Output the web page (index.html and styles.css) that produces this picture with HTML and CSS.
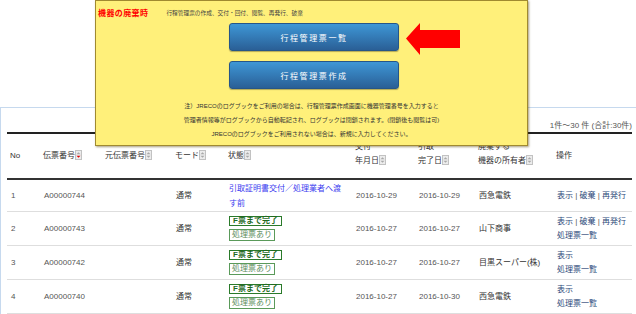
FILE: index.html
```html
<!DOCTYPE html>
<html lang="ja">
<head>
<meta charset="utf-8">
<title>行程管理票</title>
<link rel="stylesheet" href="styles.css">
</head>
<body>
<div class="page">
  <div class="list">
    <div class="count">1件～30 件 (合計:30件)</div>
    <table class="grid">
      <colgroup>
        <col class="c1"><col class="c2"><col class="c3"><col class="c4"><col class="c5"><col class="c6"><col class="c7"><col class="c8"><col class="c9">
      </colgroup>
      <thead>
        <tr>
          <th>No</th>
          <th>伝票番号<svg class="sort" viewBox="0 0 7 10"><rect x="0.5" y="0.5" width="6" height="9" fill="#ececec" stroke="#c2c2c2"/><path d="M1.5 4.2L3.5 2.2L5.5 4.2Z" fill="#a8a8a8"/><path d="M1.5 5.8L3.5 7.8L5.5 5.8Z" fill="#e00000"/></svg></th>
          <th>元伝票番号<svg class="sort" viewBox="0 0 7 10"><rect x="0.5" y="0.5" width="6" height="9" fill="#ececec" stroke="#c2c2c2"/><path d="M1.5 4.2L3.5 2.2L5.5 4.2Z" fill="#a8a8a8"/><path d="M1.5 5.8L3.5 7.8L5.5 5.8Z" fill="#a8a8a8"/></svg></th>
          <th>モード<svg class="sort" viewBox="0 0 7 10"><rect x="0.5" y="0.5" width="6" height="9" fill="#ececec" stroke="#c2c2c2"/><path d="M1.5 4.2L3.5 2.2L5.5 4.2Z" fill="#a8a8a8"/><path d="M1.5 5.8L3.5 7.8L5.5 5.8Z" fill="#a8a8a8"/></svg></th>
          <th>状態<svg class="sort" viewBox="0 0 7 10"><rect x="0.5" y="0.5" width="6" height="9" fill="#ececec" stroke="#c2c2c2"/><path d="M1.5 4.2L3.5 2.2L5.5 4.2Z" fill="#a8a8a8"/><path d="M1.5 5.8L3.5 7.8L5.5 5.8Z" fill="#a8a8a8"/></svg></th>
          <th class="two">交付<br>年月日<svg class="sort" viewBox="0 0 7 10"><rect x="0.5" y="0.5" width="6" height="9" fill="#ececec" stroke="#c2c2c2"/><path d="M1.5 4.2L3.5 2.2L5.5 4.2Z" fill="#a8a8a8"/><path d="M1.5 5.8L3.5 7.8L5.5 5.8Z" fill="#a8a8a8"/></svg></th>
          <th class="two">引取<br>完了日<svg class="sort" viewBox="0 0 7 10"><rect x="0.5" y="0.5" width="6" height="9" fill="#ececec" stroke="#c2c2c2"/><path d="M1.5 4.2L3.5 2.2L5.5 4.2Z" fill="#a8a8a8"/><path d="M1.5 5.8L3.5 7.8L5.5 5.8Z" fill="#a8a8a8"/></svg></th>
          <th class="two">廃棄する<br>機器の所有者<svg class="sort" viewBox="0 0 7 10"><rect x="0.5" y="0.5" width="6" height="9" fill="#ececec" stroke="#c2c2c2"/><path d="M1.5 4.2L3.5 2.2L5.5 4.2Z" fill="#a8a8a8"/><path d="M1.5 5.8L3.5 7.8L5.5 5.8Z" fill="#a8a8a8"/></svg></th>
          <th>操作</th>
        </tr>
      </thead>
      <tbody>
        <tr class="r1">
          <td>1</td>
          <td>A00000744</td>
          <td></td>
          <td class="dark">通常</td>
          <td class="status"><a href="#">引取証明書交付／処理業者へ渡す前</a></td>
          <td>2016-10-29</td>
          <td>2016-10-29</td>
          <td class="dark">西急電鉄</td>
          <td class="ops"><a href="#">表示</a> | <a href="#">破棄</a> | <a href="#">再発行</a></td>
        </tr>
        <tr class="r2">
          <td>2</td>
          <td>A00000743</td>
          <td></td>
          <td class="dark">通常</td>
          <td><span class="badge b1">F票まで完了</span><span class="badge b2">処理票あり</span></td>
          <td>2016-10-27</td>
          <td>2016-10-27</td>
          <td class="dark">山下商事</td>
          <td class="ops"><a href="#">表示</a> | <a href="#">破棄</a> | <a href="#">再発行</a><br><a href="#">処理票一覧</a></td>
        </tr>
        <tr class="r2">
          <td>3</td>
          <td>A00000742</td>
          <td></td>
          <td class="dark">通常</td>
          <td><span class="badge b1">F票まで完了</span><span class="badge b2">処理票あり</span></td>
          <td>2016-10-27</td>
          <td>2016-10-27</td>
          <td class="dark">目黒スーパー(株)</td>
          <td class="ops"><a href="#">表示</a><br><a href="#">処理票一覧</a></td>
        </tr>
        <tr class="r2">
          <td>4</td>
          <td>A00000740</td>
          <td></td>
          <td class="dark">通常</td>
          <td><span class="badge b1">F票まで完了</span><span class="badge b2">処理票あり</span></td>
          <td>2016-10-27</td>
          <td>2016-10-30</td>
          <td class="dark">西急電鉄</td>
          <td class="ops"><a href="#">表示</a><br><a href="#">処理票一覧</a></td>
        </tr>
      </tbody>
    </table>
  </div>

  <div class="popup">
    <div class="title"><span class="lead">機器の廃棄時</span><span class="sub">行程管理票の作成、交付・回付、閲覧、再発行、破棄</span></div>
    <a class="btn" href="#">行程管理票一覧</a>
    <a class="btn second" href="#">行程管理票作成</a>
    <p class="note">注）JRECOのログブックをご利用の場合は、行程管理票作成画面に機器管理番号を入力すると<br>管理者情報等がログブックから自動転記され、ログブックは閉鎖されます。(閉鎖後も閲覧は可)<br>JRECOのログブックをご利用されない場合は、新規に入力してください。</p>
    <svg class="arrow" viewBox="0 0 54 34" width="54" height="34"><polygon points="0,16.5 14,1 14,8 54,8 54,26 14,26 14,33" fill="#ff0000"/></svg>
  </div>
</div>
</body>
</html>
```

FILE: styles.css
```css
body {
  margin: 0;
  background: #fff;
  color: #333;
  font-family: "Liberation Sans", "Noto Sans CJK JP", sans-serif;
}

.page {
  position: relative;
  width: 636px;
  height: 314px;
  overflow: hidden;
}

.list {
  margin-top: 107px;
  border-top: 1px solid #c6d9ee;
  border-left: 1px solid #c6d9ee;
  padding: 0 4px 0 6px;
}

.count {
  text-align: right;
  font-size: 8px;
  color: #555;
  line-height: 12px;
  padding-top: 12px;
  border-bottom: 2px solid #222;
}

.grid {
  border-collapse: collapse;
  table-layout: fixed;
  width: 625px;
  font-size: 8px;
}

.c1 { width: 33px; }
.c2 { width: 62px; }
.c3 { width: 70px; }
.c4 { width: 53px; }
.c5 { width: 127px; }
.c6 { width: 63px; }
.c7 { width: 60px; }
.c8 { width: 78px; }
.c9 { width: 79px; }

.grid th {
  height: 40px;
  padding: 2px 0 2px 3px;
  font-weight: normal;
  text-align: left;
  vertical-align: middle;
  line-height: 14px;
  color: #333;
  border-bottom: 2px solid #333;
  white-space: nowrap;
}

.grid th.two {
  padding: 0 0 4px 3px;
}

.sort {
  width: 7px;
  height: 10px;
  vertical-align: -2px;
}

.grid td {
  padding: 0 4px;
  vertical-align: middle;
  line-height: 14px;
  color: #555;
  border-bottom: 1px solid #dedede;
}

.grid tr.r1 td { height: 31px; }
.grid tr.r2 td { height: 33px; }

.grid td.dark { color: #333; }

.status a {
  display: block;
  padding-right: 4px;
  line-height: 15px;
  color: #3b3bef;
  text-decoration: none;
}

.ops a {
  color: #2d4a7a;
  text-decoration: none;
}

.badge {
  display: block;
  width: fit-content;
  border: 1px solid;
  background: #fff;
}

.b1 {
  height: 8px;
  line-height: 8px;
  padding: 0 3px;
  border-color: #2a7a2a;
  color: #1f6a1f;
  font-weight: bold;
}

.b2 {
  height: 10px;
  line-height: 10px;
  padding: 0 2px;
  margin-top: 3px;
  border-color: #5a9a5a;
  color: #5c8c5c;
}

.popup {
  position: absolute;
  left: 95px;
  top: 0;
  width: 431px;
  height: 144px;
  background: #fff07a;
  border: 1px solid #a08a30;
  box-shadow: 1px 1px 2px rgba(80, 60, 0, 0.5);
  display: flex;
  flex-direction: column;
  align-items: center;
}

.title {
  align-self: stretch;
  display: flex;
  align-items: center;
  padding: 5px 0 0 2px;
  height: 12px;
}

.lead {
  color: #f00;
  font-weight: bold;
  font-size: 8px;
  letter-spacing: 0.4px;
}

.sub {
  color: #444;
  font-size: 5.7px;
  margin-left: 18px;
}

.btn {
  display: flex;
  align-items: center;
  justify-content: center;
  box-sizing: border-box;
  width: 170px;
  height: 28px;
  margin-top: 5px;
  margin-left: 5px;
  border-radius: 3px;
  border: 1px solid #265688;
  background: linear-gradient(#3e97d6, #2a5f96);
  box-shadow: 0 1px 1px rgba(0, 0, 0, 0.3);
  color: #fff;
  font-size: 8px;
  letter-spacing: 1.6px;
  text-decoration: none;
}

.btn.second {
  margin-top: 10px;
}

.note {
  margin: 10px 0 0;
  font-size: 6px;
  line-height: 14px;
  text-align: center;
  color: #333;
}

.arrow {
  position: absolute;
  left: 310px;
  top: 21px;
}
```
